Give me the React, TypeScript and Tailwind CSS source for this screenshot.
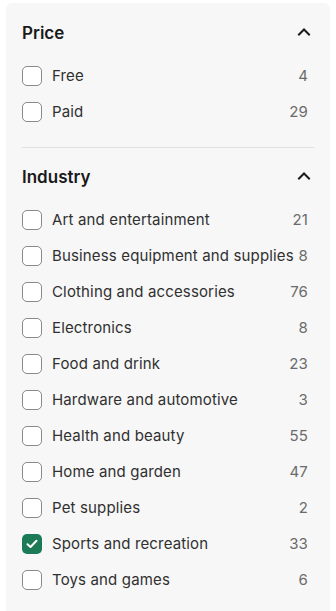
import React from "react";

type Item = { label: string; count: number; checked?: boolean };

const price: Item[] = [
  { label: "Free", count: 4 },
  { label: "Paid", count: 29 },
];

const industry: Item[] = [
  { label: "Art and entertainment", count: 21 },
  { label: "Business equipment and supplies", count: 8 },
  { label: "Clothing and accessories", count: 76 },
  { label: "Electronics", count: 8 },
  { label: "Food and drink", count: 23 },
  { label: "Hardware and automotive", count: 3 },
  { label: "Health and beauty", count: 55 },
  { label: "Home and garden", count: 47 },
  { label: "Pet supplies", count: 2 },
  { label: "Sports and recreation", count: 33, checked: true },
  { label: "Toys and games", count: 6 },
];

function Chevron() {
  return (
    <svg width="14" height="9" viewBox="0 0 14 9" fill="none" className="mb-[5px] mr-[3px]">
      <path d="M2 7.5L7 2.5L12 7.5" stroke="#1a1a1a" strokeWidth="2" strokeLinecap="square" />
    </svg>
  );
}

function Box({ checked }: { checked?: boolean }) {
  if (checked) {
    return (
      <span className="flex h-[20px] w-[20px] shrink-0 items-center justify-center rounded-[5px] bg-[#1c7a57]">
        <svg width="12" height="10" viewBox="0 0 12 10" fill="none">
          <path d="M1.5 5.2L4.5 8L10.5 1.8" stroke="white" strokeWidth="2" strokeLinecap="round" strokeLinejoin="round" />
        </svg>
      </span>
    );
  }
  return <span className="h-[20px] w-[20px] shrink-0 rounded-[5px] border-[1.5px] border-[#8a8a8a] bg-white" />;
}

function Row({ item }: { item: Item }) {
  return (
    <div className="flex h-[36px] items-center pr-[6px]">
      <Box checked={item.checked} />
      <span className="ml-[10px] flex-1 whitespace-nowrap text-[15px] tracking-[0.15px] text-[#303030]">{item.label}</span>
      <span className="ml-[4px] text-[15px] tracking-[0.15px] text-[#6b6b6b]">{item.count}</span>
    </div>
  );
}

function Heading({ title }: { title: string }) {
  return (
    <div className="flex h-[30px] items-center justify-between">
      <span className="text-[17px] font-semibold text-[#1a1a1a]">{title}</span>
      <Chevron />
    </div>
  );
}

export default function App() {
  return (
    <div className="min-h-[611px] bg-white px-[6px] pt-[3px]" style={{ fontFamily: "Inter, 'Noto Sans', sans-serif" }}>
      <div className="min-h-[608px] rounded-t-[6px] bg-[#f7f7f7] px-[16px] pt-[16px]">
        <Heading title="Price" />
        <div className="mt-[9px] flex flex-col">
          {price.map((i) => (
            <Row key={i.label} item={i} />
          ))}
        </div>
        <div className="mt-[17px] h-px bg-[#e0e0e0]" />
        <div className="mt-[15px]">
          <Heading title="Industry" />
        </div>
        <div className="mt-[9px] flex flex-col">
          {industry.map((i) => (
            <Row key={i.label} item={i} />
          ))}
        </div>
      </div>
    </div>
  );
}
